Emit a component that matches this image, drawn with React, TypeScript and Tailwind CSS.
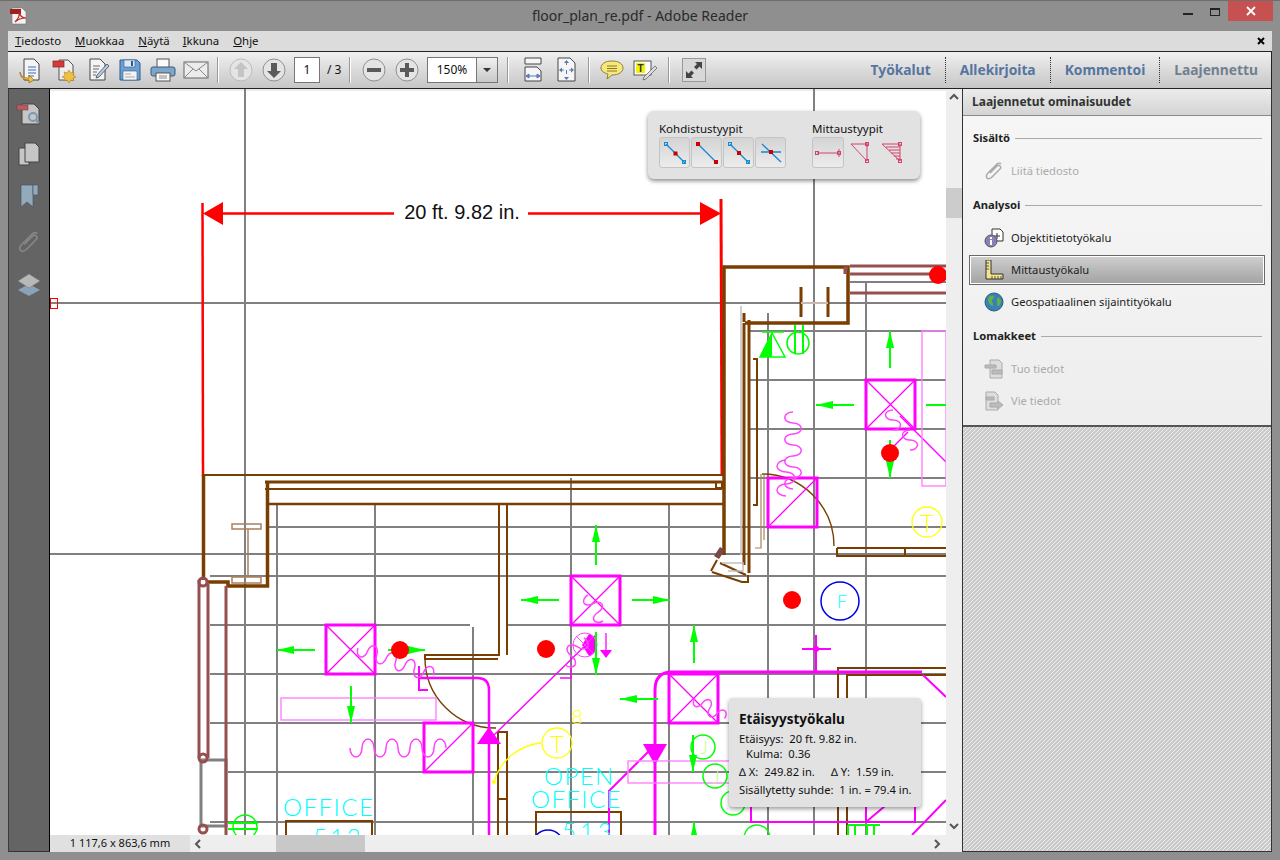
import React from "react";

const wave = (x: number, y: number, n: number, d: number, vertical = false) => {
  let p = `M${x} ${y}`;
  for (let i = 0; i < n; i++) {
    const sweep = i % 2;
    p += vertical
      ? ` a${d * 0.75} ${d / 2} 0 0 ${sweep} 0 ${d}`
      : ` a${d / 2} ${d * 0.75} 0 0 ${sweep} ${d} 0`;
  }
  return p;
};

const hLines: [number, number, number][] = [
  [303, 50, 946], [554, 50, 946], [282, 850, 946], [331, 750, 946], [380, 750, 946], [429, 750, 946],
  [478, 750, 946], [527, 268, 946], [576, 210, 946], [625, 210, 470], [625, 507, 946], [674, 210, 946],
  [723, 210, 946], [772, 228, 946], [822, 210, 946],
];
const vLines: [number, number, number][] = [
  [245, 89, 835], [814, 89, 835], [277, 504, 835], [375, 504, 835], [473, 627, 835], [571, 478, 835],
  [669, 504, 835], [768, 313, 835], [866, 282, 835],
];
const squares: [number, number, boolean][] = [
  [866, 380, true], [571, 576, true], [669, 674, true], [326, 625, true], [424, 723, false], [768, 478, false],
];
const redDots: [number, number][] = [[400, 650], [546, 649], [792, 600], [890, 453], [938, 275]];
// x1,y1 is the tail, x2,y2 the tip
const arrows: [number, number, number, number][] = [
  [315, 650, 277, 650], [388, 650, 425, 650], [351, 686, 351, 723], [559, 600, 521, 600], [632, 600, 670, 600],
  [596, 565, 596, 525], [694, 663, 694, 625], [658, 699, 620, 699], [596, 632, 596, 675], [693, 735, 693, 772],
  [694, 850, 694, 822], [890, 368, 890, 331], [854, 405, 816, 405], [926, 405, 964, 405], [890, 440, 890, 478],
];

function Arrow({ a }: { a: [number, number, number, number] }) {
  const [x1, y1, x2, y2] = a;
  const len = Math.hypot(x2 - x1, y2 - y1);
  const ux = (x2 - x1) / len;
  const uy = (y2 - y1) / len;
  const bx = x2 - ux * 17;
  const by = y2 - uy * 17;
  return (
    <g>
      <line x1={x1} y1={y1} x2={x2} y2={y2} stroke="#00ff00" strokeWidth={2} />
      <polygon points={`${x2},${y2} ${bx - uy * 4},${by + ux * 4} ${bx + uy * 4},${by - ux * 4}`} fill="#00ff00" />
    </g>
  );
}

function Plan() {
  const brown = "#7a3e00";
  const rose = "#964f4f";
  const mag = "#ff00ff";
  const soft = "#ff44ff";
  return (
    <svg viewBox="50 89 896 746" width={896} height={746} className="block">
      <rect x={50} y={89} width={896} height={746} fill="#fff" />
      <rect x={50} y={89} width={896} height={2} fill="#ececec" />
      <g stroke="#808080" strokeWidth={2} fill="none">
        {hLines.map(([y, a, b]) => <line key={`h${y}${a}`} x1={a} y1={y} x2={b} y2={y} />)}
        {vLines.map(([x, a, b]) => <line key={`v${x}`} x1={x} y1={a} x2={x} y2={b} />)}
        <rect x={201} y={760} width={25} height={66} strokeWidth={3} fill="none" />
      </g>
      <rect x={50.5} y={298.5} width={7} height={10} fill="none" stroke="#ff0000" />

      {/* dimension */}
      <g stroke="#ff0000" fill="#ff0000">
        <line x1={202.5} y1={203} x2={203} y2={476} strokeWidth={2.5} />
        <line x1={721} y1={199} x2={722} y2={476} strokeWidth={3} />
        <line x1={220} y1={213.5} x2={394} y2={213.5} strokeWidth={2.5} />
        <line x1={528} y1={213.5} x2={704} y2={213.5} strokeWidth={2.5} />
        <polygon points="203,213.5 223,202 223,225" stroke="none" />
        <polygon points="721,213.5 700,202 700,225" stroke="none" />
      </g>
      <text x={462} y={219} textAnchor="middle" fontFamily="Liberation Sans, sans-serif" fontSize={20} fill="#111">20 ft. 9.82 in.</text>

      {/* walls */}
      <g stroke={brown} fill="none" strokeWidth={2}>
        <path d="M202 475H722M265 489H722" />
        <path d="M265 482H722" strokeWidth={3} />
        <path d="M267 504H724" strokeWidth={2.5} />
        <path d="M203.5 475V580M208 582H228V586H267.5V481" strokeWidth={3.5} />
        <path d="M499 504V655H425V659H498M507 504V655" strokeWidth={2} />
        <path d="M716 482h6v6h-6z" />
        <path d="M724 555V267H848V323H745" strokeWidth={3.5} />
        <path d="M749 320V573M744 323V565" strokeWidth={3} />
        <path d="M753 359h4v146h-4" />
        <path d="M744 322V313M801 287V317M828 287V317" strokeWidth={3} />
        <path d="M838 835V668H946M847 835V675H946" />
        <path d="M837 548H946M837 556H946M837 548V557M905 548V557" />
        <path d="M286 835V821H372V835M536 835V812H621V835" />
        <path d="M498 732h9v103M498 732V835M498 799h9" />
        <path d="M712 572l30 10h6v-7" />
        <path d="M717 560l-6 11M720 563l26 12" strokeWidth={2} />
      </g>
      <path d="M425 657 A70 70 0 0 0 496 728" fill="none" stroke={brown} strokeWidth={1.4} />
      <path d="M762 474 A72 72 0 0 1 834 546" fill="none" stroke={brown} strokeWidth={1.4} />
      <path d="M764 474V540M761 474V548H755" fill="none" stroke="#a9805c" strokeWidth={1.2} />
      <path d="M232 524h29v5h-29zM232 577h29v6h-29zM248 529v48" fill="none" stroke="#a9805c" strokeWidth={1.5} />
      <path d="M801 303H828" stroke="#c8b8b0" strokeWidth={2} />
      <path d="M741 306V555" stroke="#c0c0c0" strokeWidth={1.5} />
      <path d="M714 556l6-9 5 3-6 9z" fill="#7a4848" />
      <path d="M722 563h21v8h-15" fill="none" stroke="#c0c0c0" strokeWidth={1.5} />
      <g stroke={rose} fill="none" strokeWidth={3}>
        <path d="M850 266H946M850 274H946M850 293H946M848 268h-3v6" />
        <path d="M199 580V758M208 584V758M226 586V835" />
        <circle cx={203} cy={582} r={4} />
        <circle cx={203} cy={758} r={4} />
        <circle cx={203} cy={829} r={4} />
      </g>

      {/* ducts */}
      <g stroke={mag} fill="none">
        {squares.map(([x, y, both]) => (
          <g key={`${x}-${y}`}>
            <rect x={x} y={y} width={49} height={49} strokeWidth={3} />
            <path d={both ? `M${x} ${y}L${x + 49} ${y + 49}M${x} ${y + 49}L${x + 49} ${y}` : `M${x} ${y + 49}L${x + 49} ${y}`} strokeWidth={1.3} />
          </g>
        ))}
        <path d="M419 666V690H428" strokeWidth={2} />
        <path d="M420 678H477Q489 678 489 690V835" strokeWidth={2.5} />
        <path d="M655 835V690Q655 672 672 672H922" strokeWidth={3} />
        <path d="M494 735L597 634M560 678H571V668" strokeWidth={1.4} />
        <path d="M653 747L609 791V835M751 805V822H866" strokeWidth={2} />
        <path d="M866 806V822H915V806M866 822L885 806M912 835L946 800M923 675L946 697" strokeWidth={2} />
        <path d="M802 649H831M816 635V672" strokeWidth={2} />
        <path d="M606 633V650" strokeWidth={1.3} />
        <path d="M900 416L946 462M892 448L908 432" strokeWidth={1.4} />
      </g>
      <polygon points="489,727 477,744 501,744" fill={mag} />
      <polygon points="643,744 667,744 655,765" fill={mag} />
      <polygon points="600,650 612,650 606,658" fill={mag} />
      <circle cx={816} cy={649} r={3} fill={mag} />
      <circle cx={585} cy={645} r={12} fill="none" stroke={soft} strokeWidth={1} />
      <path d="M589 634 A12 12 0 0 1 589 656 L582 645Z" fill={mag} />
      <path d="M576 636L594 654M576 654L594 636" stroke={soft} strokeWidth={1} />
      <g stroke="#ff80ff" fill="none" strokeWidth={1.4}>
        <rect x={281} y={698} width={155} height={22} />
        <rect x={922} y={331} width={24} height={155} />
        <rect x={628} y={761} width={102} height={22} />
      </g>
      <g stroke={soft} fill="none" strokeWidth={1.5}>
        <path d={wave(350, 748, 8, 12)} />
        <path d={wave(358, 648, 8, 10)} transform="rotate(20 358 648)" />
        <path d={wave(793, 412, 7, 11, true)} />
        <path d={wave(565, 665, 3, 11)} transform="rotate(-55 565 665)" />
        <path d={wave(588, 595, 3, 10)} transform="rotate(60 588 595)" />
        <path d={wave(695, 698, 4, 9)} transform="rotate(35 695 698)" />
        <path d={wave(786, 460, 3, 12, true)} />
        <path d={wave(893, 410, 2, 10, true)} />
        <path d={wave(910, 430, 2, 10, true)} />
      </g>

      {/* devices */}
      {arrows.map((a) => <Arrow key={a.join()} a={a} />)}
      {redDots.map(([x, y]) => <circle key={`${x}`} cx={x} cy={y} r={9} fill="#ff0000" />)}
      <g stroke="#00ff00" fill="none" strokeWidth={1.5}>
        <path d="M762 332H784M772 333L785 357H760Z" />
        <circle cx={798} cy={343} r={11} />
        <path d="M795 325V354M803 325V354" strokeWidth={2} />
        <circle cx={703} cy={747} r={12} />
        <circle cx={715} cy={776} r={12} />
        <circle cx={733} cy={803} r={12} />
        <circle cx={757} cy={838} r={13} />
        <circle cx={245} cy={827} r={12} />
        <path d="M228 823H258M228 829H258M848 825H880M848 825V835M855 825V835M867 825V835M874 825V835" strokeWidth={2} />
      </g>
      <polygon points="772,333 760,357 772,357" fill="#00ff00" />
      <g fontFamily="Lato, sans-serif" fontWeight={300}>
        <text x={704} y={754} textAnchor="middle" fontSize={18} fill="#b9ff80">J</text>
        <text x={716} y={783} textAnchor="middle" fontSize={18} fill="#b9ff80">J</text>
        <text x={577} y={724} textAnchor="middle" fontSize={20} fill="#ffff00">8</text>
        <text x={557} y={753} textAnchor="middle" fontSize={24} fill="#ffff00">T</text>
        <text x={927} y={532} textAnchor="middle" fontSize={24} fill="#ffff00">T</text>
        <text x={842} y={608} textAnchor="middle" fontSize={18} fill="#00ffff">F</text>
        <text x={283} y={816} fontSize={24} letterSpacing={1.5} fill="#00ffff">OFFICE</text>
        <text x={313} y={846} fontSize={24} letterSpacing={3} fill="#00ffff">513</text>
        <text x={544} y={785} fontSize={24} letterSpacing={1.4} fill="#00ffff">OPEN</text>
        <text x={531} y={808} fontSize={24} letterSpacing={1.4} fill="#00ffff">OFFICE</text>
        <text x={562} y={840} fontSize={24} letterSpacing={4} fill="#00ffff">513</text>
      </g>
      <g fill="none" stroke="#ffff00" strokeWidth={1.3}>
        <circle cx={557} cy={743} r={15} />
        <circle cx={927} cy={522} r={15} />
        <path d="M541 743C520 745 500 760 494 782" />
      </g>
      <circle cx={494} cy={782} r={2} fill="#ffff00" />
      <circle cx={840} cy={601} r={19} fill="none" stroke="#0000e0" strokeWidth={1.5} />
      <circle cx={548} cy={846} r={16} fill="none" stroke="#0000e0" strokeWidth={1.5} />
    </svg>
  );
}

const Doc = () => (
  <path d="M6 2h10l5 5v16H6z" fill="#f4f4f4" stroke="#444" strokeWidth={1} />
);

function ToolIcon({ kind }: { kind: string }) {
  return (
    <svg viewBox="0 0 26 26" width={26} height={26}>
      {kind === "open" && (
        <g>
          <Doc />
          <path d="M10 10h8M10 13h8M10 16h8M10 19h6" stroke="#3a6fc4" strokeWidth={1} />
          <path d="M2 15c1 5 4 6 9 6v-3l5 5-5 3v-3c-6 0-9-3-9-8z" fill="#f0c040" stroke="#a07020" strokeWidth={0.8} />
        </g>
      )}
      {kind === "create" && (
        <g>
          <path d="M8 3h9l5 5v15H8z" fill="#eee" stroke="#555" />
          <rect x={2} y={4} width={11} height={6} fill="#d63a3a" stroke="#8a2020" strokeWidth={0.7} />
          <path d="M18 13l2 3 3-1-1 3 3 2-3 1 1 3-3-1-2 3-2-3-3 1 1-3-3-1 3-2-1-3 3 1z" fill="#f0c040" stroke="#b08020" strokeWidth={0.6} />
        </g>
      )}
      {kind === "edit" && (
        <g>
          <Doc />
          <path d="M9 9h7M9 12h6M9 15h4M9 18h3" stroke="#666" strokeWidth={1} />
          <path d="M23 7l2 2-10 11-3 1 1-3z" fill="#b9cce6" stroke="#445" strokeWidth={0.8} />
        </g>
      )}
      {kind === "save" && (
        <g>
          <path d="M3 3h17l3 3v17H3z" fill="#6e9fd4" stroke="#2f5a8a" />
          <rect x={7} y={3} width={11} height={7} fill="#dfe9f5" stroke="#2f5a8a" strokeWidth={0.6} />
          <rect x={14} y={4} width={2} height={5} fill="#2f5a8a" />
          <rect x={6} y={14} width={14} height={9} fill="#f4f4f4" stroke="#2f5a8a" strokeWidth={0.6} />
          <path d="M8 17h6M8 20h10" stroke="#aaa" />
        </g>
      )}
      {kind === "print" && (
        <g>
          <rect x={7} y={2} width={12} height={9} fill="#fafafa" stroke="#555" />
          <rect x={1} y={10} width={24} height={9} rx={2} fill="#7ea6c9" stroke="#3d5a78" />
          <rect x={6} y={16} width={14} height={8} fill="#fafafa" stroke="#555" />
          <path d="M9 19h8M9 21h8" stroke="#888" />
        </g>
      )}
      {kind === "mail" && (
        <g>
          <rect x={1} y={5} width={24} height={16} fill="#ececec" stroke="#666" />
          <path d="M1 5l12 9 12-9M1 21l9-9M25 21l-9-9" fill="none" stroke="#888" />
        </g>
      )}
      {kind === "fitw" && (
        <g>
          <path d="M5 1h16v6H5z" fill="#f6f6f6" stroke="#444" />
          <path d="M5 10h12l4 4v10H5z" fill="#f6f6f6" stroke="#444" />
          <path d="M6 19h14M6 19l3-2v4zM20 19l-3-2v4z" stroke="#5b78b8" fill="#5b78b8" strokeWidth={1} />
        </g>
      )}
      {kind === "fitp" && (
        <g>
          <path d="M5 1h12l5 5v18H5z" fill="#f6f6f6" stroke="#444" />
          <path d="M7 13h13M13.5 4v18" stroke="#5b78b8" strokeDasharray="4 5" />
          <path d="M13.5 3l-2.5 3h5zM13.5 23l-2.5-3h5zM6 13l3-2.500v5zM21 13l-3-2.500v5z" fill="#5b78b8" />
        </g>
      )}
      {kind === "note" && (
        <g>
          <path d="M13 4c7 0 11 3 11 7s-4 7-11 7l-5 4 1-5c-4-1-7-3-7-6 0-4 4-7 11-7z" fill="#f7e87a" stroke="#8a8040" />
          <path d="M8 9h10M8 11.500h10M8 14h10" stroke="#8a7a30" />
        </g>
      )}
      {kind === "text" && (
        <g>
          <rect x={2} y={4} width={17} height={14} fill="#fff" stroke="#555" />
          <rect x={4} y={6} width={9} height={10} fill="#f5f100" />
          <text x={8.500} y={15} textAnchor="middle" fontFamily="Liberation Sans, sans-serif" fontSize={10} fontWeight={700} fill="#333">T</text>
          <path d="M23 9l2 2-11 11-3 1 1-3z" fill="#ddd" stroke="#666" strokeWidth={0.8} />
        </g>
      )}
    </svg>
  );
}

function Round({ dir, off }: { dir?: "up" | "down" | "minus" | "plus"; off?: boolean }) {
  const c = off ? "#c4c4c4" : "#5a5a5a";
  return (
    <svg viewBox="0 0 24 24" width={24} height={24}>
      <circle cx={12} cy={12} r={11} fill="#e4e4e4" stroke={off ? "#bbb" : "#909090"} />
      {dir === "up" && <path d="M12 4l7 7h-4v8H9v-8H5z" fill={c} />}
      {dir === "down" && <path d="M12 20l7-7h-4V5H9v8H5z" fill={c} />}
      {dir === "minus" && <rect x={5} y={10} width={14} height={4} fill={c} />}
      {dir === "plus" && <path d="M10 5h4v5h5v4h-5v5h-4v-5H5v-4h5z" fill={c} />}
    </svg>
  );
}

const Sep = ({ cls }: { cls: string }) => <div className={`w-[2px] h-[26px] bg-[#999] border-r border-white ${cls}`} />;

function Toolbar() {
  const item = "w-[33px] flex justify-center";
  return (
    <div className="h-[38px] border-y border-[#222] border-r bg-gradient-to-b from-[#f0f0f0] to-[#c6c6c6] flex items-center pl-[6px] text-[12px] text-[#111]">
      {["open", "create", "edit", "save", "print", "mail"].map((k) => (
        <div key={k} className={item}><ToolIcon kind={k} /></div>
      ))}
      <Sep cls="ml-[5px] mr-[5px]" />
      <div className={item}><Round dir="up" off /></div>
      <div className={item}><Round dir="down" /></div>
      <div className="ml-[4px] w-[26px] h-[26px] bg-white border border-[#777] flex items-center justify-center">1</div>
      <span className="ml-[7px] w-[16px]">/ 3</span>
      <Sep cls="ml-[6px] mr-[6px]" />
      <div className={item}><Round dir="minus" /></div>
      <div className={item}><Round dir="plus" /></div>
      <div className="ml-[4px] w-[71px] h-[26px] bg-white border border-[#777] flex items-center">
        <span className="w-[48px] text-center">150%</span>
        <div className="flex-1 h-full border-l border-[#777] bg-gradient-to-b from-[#f0f0f0] to-[#c8c8c8] flex items-center justify-center">
          <div className="w-0 h-0 border-x-[4px] border-x-transparent border-t-[4px] border-t-[#333]" />
        </div>
      </div>
      <Sep cls="ml-[9px] mr-[7px]" />
      <div className={item}><ToolIcon kind="fitw" /></div>
      <div className={item}><ToolIcon kind="fitp" /></div>
      <Sep cls="ml-[6px] mr-[5px]" />
      <div className={item}><ToolIcon kind="note" /></div>
      <div className={item}><ToolIcon kind="text" /></div>
      <Sep cls="ml-[7px] mr-[12px]" />
      <div className="w-[24px] h-[24px] bg-[#d8d8d8] border border-[#999] flex items-center justify-center">
        <svg viewBox="0 0 20 20" width={20} height={20}>
          <path d="M11 2h7v7l-2.500-2.500-3 3-2.500-2.500 3-3zM9 18H2v-7l2.500 2.500 3-3 2.500 2.500-3 3z" fill="#444" />
        </svg>
      </div>
      <div className="ml-auto flex items-center font-bold text-[13.8px] text-[#56759f] pr-[13px]">
        <span>Työkalut</span>
        <div className="h-[26px] mx-[14px] border-l border-dotted border-[#333]" />
        <span>Allekirjoita</span>
        <div className="h-[26px] mx-[14px] border-l border-dotted border-[#333]" />
        <span>Kommentoi</span>
        <div className="h-[26px] mx-[14px] border-l border-dotted border-[#333]" />
        <span className="text-[#71808f]">Laajennettu</span>
      </div>
    </div>
  );
}

const Clip = ({ c = "#aaa" }: { c?: string }) => (
  <svg viewBox="0 0 20 20" width={20} height={20} fill="none" stroke={c} strokeWidth={1.5}>
    <path d="M17 3c-1-1-3-1-4 0L4 12c-2 2-2 4-1 5s3 1 5-1l8-8c1-1 1-2 0-3s-2-1-3 0l-7 7" />
  </svg>
);

function Measure({ kind }: { kind: number }) {
  return (
    <svg viewBox="0 0 24 24" width={24} height={24} fill="none">
      {kind === 3 ? (
        <path d="M3 4L22 22M2 12H22" stroke="#1689cf" strokeWidth={1.3} transform="translate(0 -1)" />
      ) : (
        <line x1={3} y1={3} x2={22} y2={22} stroke="#1689cf" strokeWidth={1.3} />
      )}
      {kind === 0 && <><rect x={1.500} y={1.500} width={3} height={3} stroke="#1689cf" /><rect x={10.500} y={10.500} width={4} height={4} fill="#c00" /><rect x={19.500} y={19.500} width={3} height={3} stroke="#1689cf" /></>}
      {kind === 1 && <><rect x={1} y={1} width={4} height={4} fill="#c00" /><rect x={19} y={19} width={4} height={4} fill="#c00" /></>}
      {kind === 2 && <><rect x={1.500} y={1.500} width={3} height={3} stroke="#1689cf" /><rect x={10} y={10} width={4} height={4} fill="#c00" /><rect x={19.500} y={19.500} width={3} height={3} stroke="#1689cf" /></>}
      {kind === 3 && <rect x={10} y={9} width={4} height={4} fill="#c00" />}
    </svg>
  );
}

function FloatPanel() {
  const btn = "w-[31px] h-[31px] rounded-[3px] border border-[#c4c4c4] bg-gradient-to-b from-[#d4d4d4] to-[#ececec] flex items-center justify-center";
  return (
    <div className="absolute left-[598px] top-[22px] w-[272px] h-[68px] rounded-[6px] bg-[#e2e2e2] shadow-[0_2px_4px_rgba(0,0,0,0.45)] flex pl-[11px] pt-[9px] text-[11.5px] text-[#111]">
      <div>
        <div className="h-[17px] leading-[17px]">Kohdistustyypit</div>
        <div className="flex gap-[1px]">
          {[0, 1, 2, 3].map((k) => <div key={k} className={btn}><Measure kind={k} /></div>)}
        </div>
      </div>
      <div className="ml-[26px]">
        <div className="h-[17px] leading-[17px]">Mittaustyypit</div>
        <div className="flex gap-[1px]">
          <div className="w-[32px] h-[31px] rounded-[3px] border border-[#c4c4c4] bg-gradient-to-b from-[#d4d4d4] to-[#ececec] flex items-center justify-center">
            <svg viewBox="0 0 28 12" width={28} height={12} fill="none" stroke="#d4436c">
              <path d="M3 6H25M25 2V10" />
              <rect x={1.500} y={4.500} width={3} height={3} />
              <rect x={23.500} y={4.500} width={3} height={3} />
            </svg>
          </div>
          <div className="w-[31px] h-[31px] flex items-center justify-center">
            <svg viewBox="0 0 24 24" width={24} height={24} fill="none" stroke="#d4436c">
              <path d="M2 3H18V20ZM18 1V6" />
              <rect x={16.500} y={1.500} width={3} height={3} />
              <rect x={16.500} y={18.500} width={3} height={3} />
            </svg>
          </div>
          <div className="w-[31px] h-[31px] flex items-center justify-center">
            <svg viewBox="0 0 24 24" width={24} height={24} fill="none" stroke="#d4436c">
              <path d="M1 3H19V20Z" />
              <path d="M5 6H19M8 9H19M10 12H19M13 15H19M15 18H19" />
              <rect x={17.500} y={1.500} width={3} height={3} />
              <rect x={17.500} y={18.500} width={3} height={3} />
            </svg>
          </div>
        </div>
      </div>
    </div>
  );
}

function InfoTip() {
  return (
    <div className="absolute left-[679px] top-[609px] w-[192px] h-[109px] rounded-[4px] bg-[#e2e2e2] shadow-[0_2px_4px_rgba(0,0,0,0.4)] pl-[10px] pt-[12px] text-[11.2px] leading-[15px] text-[#111] whitespace-nowrap">
      <div className="font-bold text-[13.5px] leading-[18px] mb-[3px]">Etäisyystyökalu</div>
      <div>Etäisyys:&nbsp; 20 ft. 9.82 in.</div>
      <div className="pl-[7px]">Kulma:&nbsp; 0.36</div>
      <div className="mt-[3px] flex">
        <span className="w-[92px]">∆ X:&nbsp; 249.82 in.</span>
        <span>∆ Y:&nbsp; 1.59 in.</span>
      </div>
      <div className="mt-[3px]">Sisällytetty suhde:&nbsp; 1 in. = 79.4 in.</div>
    </div>
  );
}

function Section({ title, children, first }: { title: string; children: React.ReactNode; first?: boolean }) {
  return (
    <div className={first ? "" : "mt-[7px]"}>
      <div className="h-[22px] flex items-center pl-[10px] pr-[9px] font-bold text-[11.2px] text-[#222]">
        <span>{title}</span>
        <div className="flex-1 ml-[5px] h-px bg-[#aaa]" />
      </div>
      <div className="mt-[6px]">{children}</div>
    </div>
  );
}

function Row({ label, icon, off, active }: { label: string; icon: React.ReactNode; off?: boolean; active?: boolean }) {
  const look = active
    ? "h-[30px] my-[1px] pl-[14px] border border-[#6a6a6a] bg-gradient-to-b from-[#cfcfcf] to-[#a2a2a2] outline outline-1 outline-white -outline-offset-2 text-[#222]"
    : off
      ? "h-[32px] pl-[15px] text-[#aaa]"
      : "h-[32px] pl-[15px] text-[#222]";
  return (
    <div className={`flex items-center mx-[6px] text-[11.2px] w-[296px] ${look}`}>
      <div className="w-[20px] h-[20px] mr-[7px] shrink-0">{icon}</div>
      <span>{label}</span>
    </div>
  );
}

function RightPanel() {
  return (
    <div className="w-[310px] h-full border-x border-[#333] border-b flex flex-col">
      <div className="h-[27px] border-b border-[#8a8a8a] bg-gradient-to-b from-[#ececec] to-[#d4d4d4] flex items-center pl-[9px] font-bold text-[12px] text-[#333] shrink-0">
        Laajennetut ominaisuudet
      </div>
      <div className="h-[311px] pt-[11px] bg-gradient-to-b from-[#f6f6f6] to-[#eeeeee] border-b-2 border-[#555] shrink-0">
        <Section title="Sisältö" first>
          <Row label="Liitä tiedosto" off icon={<Clip />} />
        </Section>
        <Section title="Analysoi">
          <Row
            label="Objektitietotyökalu"
            icon={
              <svg viewBox="0 0 20 20" width={20} height={20}>
                <path d="M8 1h8l3 3v9H8z" fill="#fff" stroke="#333" />
                <path d="M13 5v6M10 8h6" stroke="#333" />
                <circle cx={7} cy={13} r={6} fill="#8c7fb8" stroke="#555" />
                <rect x={6} y={12} width={2} height={5} fill="#fff" />
                <rect x={6} y={9} width={2} height={2} fill="#fff" />
              </svg>
            }
          />
          <Row
            label="Mittaustyökalu"
            active
            icon={
              <svg viewBox="0 0 20 20" width={20} height={20}>
                <path d="M2 0h5v14h12v5H2z" fill="#f4e48c" stroke="#333" />
                <path d="M8 16v3M11 16v3M14 16v3M17 16v3M2 3h3M2 6h3M2 9h3" stroke="#333" strokeWidth={0.8} />
              </svg>
            }
          />
          <Row
            label="Geospatiaalinen sijaintityökalu"
            icon={
              <svg viewBox="0 0 20 20" width={20} height={20}>
                <circle cx={10} cy={10} r={9} fill="#3a7fb8" stroke="#2a5a80" />
                <path d="M4 6c2-3 5-3 6-2 0 3-2 3-2 5s2 2 1 5c-3 0-5-4-5-8zM13 6c3-1 4 2 4 4l-2 4c-3 0-2-3-2-4z" fill="#5fb24a" />
              </svg>
            }
          />
        </Section>
        <Section title="Lomakkeet">
          <Row
            label="Tuo tiedot"
            off
            icon={
              <svg viewBox="0 0 20 20" width={20} height={20} fill="#ddd" stroke="#aaa">
                <path d="M6 1h9l3 3v15H6z" />
                <path d="M1 6h11v3H1zM8 11h10v4H8z" fill="#bbb" />
              </svg>
            }
          />
          <Row
            label="Vie tiedot"
            off
            icon={
              <svg viewBox="0 0 20 20" width={20} height={20} fill="#ddd" stroke="#aaa">
                <path d="M2 1h9l3 3v15H2z" />
                <path d="M2 6h8v3H2zM6 12h8v-2l5 4-5 4v-2H6z" fill="#bbb" />
              </svg>
            }
          />
        </Section>
      </div>
      <div className="flex-1 bg-[repeating-linear-gradient(135deg,#cacaca_0,#cacaca_2px,#f0f0f0_2px,#f0f0f0_2.828px)]" />
    </div>
  );
}

function SideRail() {
  return (
    <div className="w-[42px] h-full bg-[#646464] border-l border-[#3c3c3c] border-r border-r-black border-b border-b-[#333] pt-[3px] flex flex-col items-center">
      <div className="h-[43px] flex items-center">
        <svg viewBox="0 0 26 26" width={26} height={26}>
          <path d="M6 3h12l5 5v15H6z" fill="#c6c6c6" stroke="#444" />
          <rect x={1} y={4} width={11} height={5} fill="#b85c64" stroke="#7a3e44" strokeWidth={0.6} />
          <circle cx={17} cy={16} r={4} fill="none" stroke="#7d9ab0" strokeWidth={2} />
          <path d="M20 19l3 3" stroke="#7d9ab0" strokeWidth={2.5} />
        </svg>
      </div>
      <div className="h-[37px] flex items-center">
        <svg viewBox="0 0 24 24" width={24} height={24}>
          <path d="M2 6h10v17H2z" fill="#c6c6c6" stroke="#444" />
          <path d="M8 1h10l4 4v15H8z" fill="#c6c6c6" stroke="#444" />
        </svg>
      </div>
      <div className="h-[48px] flex items-center">
        <svg viewBox="0 0 22 24" width={22} height={24}>
          <path d="M3 1h12v22l-6-5-6 5z" fill="#93a9bc" stroke="#4a5866" strokeWidth={0.7} />
          <path d="M15 1h5v10h-5z" fill="#93a9bc" stroke="#4a5866" strokeWidth={0.7} />
        </svg>
      </div>
      <div className="h-[43px] flex items-center">
        <svg viewBox="0 0 20 20" width={24} height={24} fill="none" stroke="#8a8a8a" strokeWidth={1.2}>
          <path d="M17 3c-1-1-3-1-4 0L4 12c-2 2-2 4-1 5s3 1 5-1l8-8c1-1 1-2 0-3s-2-1-3 0l-7 7" />
        </svg>
      </div>
      <div className="h-[43px] flex items-center">
        <svg viewBox="0 0 24 24" width={24} height={24}>
          <path d="M12 11l11 6-11 6-11-6z" fill="#8ba2b8" />
          <path d="M12 1l11 7-11 7-11-7z" fill="#b8b8b8" stroke="#777" strokeWidth={0.5} />
        </svg>
      </div>
    </div>
  );
}

const Chevron = ({ d }: { d: string }) => (
  <svg viewBox="0 0 10 10" width={10} height={10} fill="none" stroke="#555" strokeWidth={2}>
    <path d={d} />
  </svg>
);

export default function App() {
  return (
    <div className="w-[1280px] h-[860px] overflow-hidden bg-[#8f8f8f] border-t border-[#6e6e6e] flex flex-col text-[12px] font-['Noto_Sans',sans-serif]">
      {/* title bar */}
      <div className="h-[30px] relative flex items-center justify-center text-[14px] text-[#2a2a2a]">
        <svg viewBox="0 0 18 18" width={18} height={18} className="absolute left-[9px] top-[6px]">
          <path d="M3 1h10l4 4v12H3z" fill="#f4f4f4" stroke="#777" strokeWidth={0.6} />
          <rect x={1} y={2} width={11} height={5} fill="#a02020" />
          <path d="M6 15c3-3 5-7 4-10 1 4 3 6 7 6-4 0-8 1-11 4z" fill="none" stroke="#c02020" strokeWidth={1.2} />
        </svg>
        <span className="relative -top-[1px]">floor_plan_re.pdf - Adobe Reader</span>
        <div className="absolute right-[7px] top-0 h-[20px] flex items-start">
          <div className="w-[10px] h-[2px] bg-[#222] mt-[12px] mr-[17px]" />
          <div className="w-[10px] h-[8px] border border-[#222] border-t-2 mt-[7px] mr-[8px]" />
          <div className="w-[45px] h-[20px] bg-[#c75050] flex items-center justify-center">
            <svg viewBox="0 0 10 10" width={10} height={10} stroke="#fff" strokeWidth={1.8}><path d="M1 1L9 9M9 1L1 9" /></svg>
          </div>
        </div>
      </div>

      <div className="w-[1264px] ml-[8px] flex flex-col">
        {/* menu */}
        <div className="h-[20px] bg-[#dcdcdc] flex items-center pl-[7px] text-[11.4px] text-[#111] relative">
          <span className="mr-[14px]"><u>T</u>iedosto</span>
          <span className="mr-[14px]"><u>M</u>uokkaa</span>
          <span className="mr-[13px]"><u>N</u>äytä</span>
          <span className="mr-[14px]"><u>I</u>kkuna</span>
          <span><u>O</u>hje</span>
          <svg viewBox="0 0 8 8" width={8} height={8} stroke="#000" strokeWidth={2} className="absolute right-[7px] top-[6px]"><path d="M1 1L7 7M7 1L1 7" /></svg>
        </div>
        <Toolbar />

        {/* main */}
        <div className="h-[763px] flex">
          <SideRail />
          <div className="w-[912px] h-full flex flex-col relative">
            <div className="h-[746px] flex">
              <Plan />
              <div className="w-[16px] bg-[#eeeeee] flex flex-col items-center">
                <div className="h-[16px] flex items-center"><Chevron d="M1 7L5 3L9 7" /></div>
                <div className="mt-[83px] w-full h-[30px] bg-[#cccccc]" />
                <div className="mt-auto h-[16px] mb-[1px] flex items-center"><Chevron d="M1 3L5 7L9 3" /></div>
              </div>
            </div>
            <div className="h-[17px] bg-[#eeeeee] flex items-center">
              <div className="w-[140px] h-full bg-[#e0e0e0] flex items-center justify-center text-[11px] text-[#111]">1 117,6 x 863,6 mm</div>
              <div className="w-[16px] flex justify-center"><Chevron d="M7 1L3 5L7 9" /></div>
              <div className="ml-[70px] w-[89px] h-full bg-[#c8c8c8]" />
              <div className="ml-auto mr-[20px] flex"><Chevron d="M3 1L7 5L3 9" /></div>
            </div>
            <FloatPanel />
            <InfoTip />
          </div>
          <RightPanel />
        </div>
      </div>
    </div>
  );
}
